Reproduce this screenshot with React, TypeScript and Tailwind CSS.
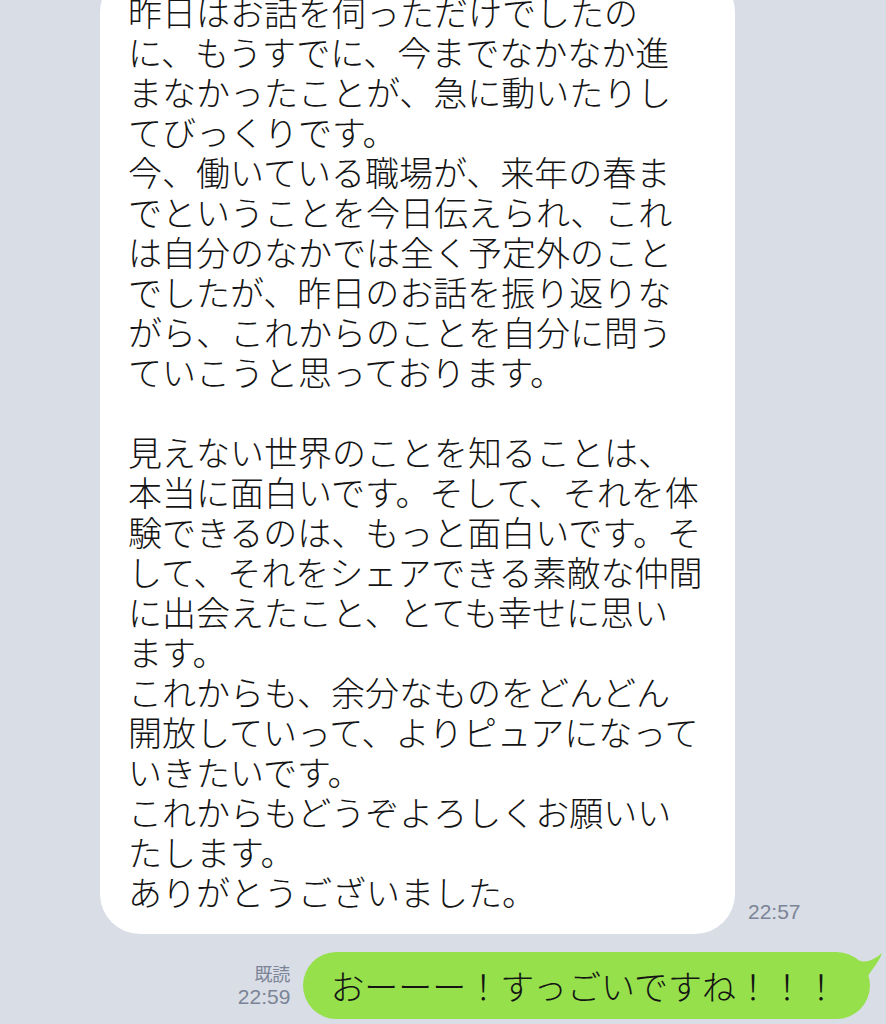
import React from 'react';

const lines = [
  '昨日はお話を伺っただけでしたの',
  'に、もうすでに、今までなかなか進',
  'まなかったことが、急に動いたりし',
  'てびっくりです。',
  '今、働いている職場が、来年の春ま',
  'でということを今日伝えられ、これ',
  'は自分のなかでは全く予定外のこと',
  'でしたが、昨日のお話を振り返りな',
  'がら、これからのことを自分に問う',
  'ていこうと思っております。',
  '',
  '見えない世界のことを知ることは、',
  '本当に面白いです。そして、それを体',
  '験できるのは、もっと面白いです。そ',
  'して、それをシェアできる素敵な仲間',
  'に出会えたこと、とても幸せに思い',
  'ます。',
  'これからも、余分なものをどんどん',
  '開放していって、よりピュアになって',
  'いきたいです。',
  'これからもどうぞよろしくお願いい',
  'たします。',
  'ありがとうございました。',
];

const jp = { fontFamily: '"Noto Sans CJK JP", "Noto Sans", sans-serif' };
const meta = { fontFamily: '"Liberation Sans", "Noto Sans CJK JP", sans-serif' };

const App: React.FC = () => {
  return (
    <div className="w-full h-[1024px] bg-[#d9dde6] flex flex-col justify-end overflow-hidden pb-[5px]">
      <div className="flex items-end pl-[100px]">
        <div className="w-[635px] rounded-[40px] bg-white pl-[28px] pr-[20px] pt-[20px] pb-[22px] text-[#141414] font-light" style={jp}>
          {lines.map((line, i) => (
            <div key={i} className="h-[40px] leading-[40px] text-[34px] whitespace-nowrap">
              {line}
            </div>
          ))}
        </div>
        <span className="ml-[13px] mb-[10px] text-[21px] leading-[24px] text-[#7b8496]" style={meta}>
          22:57
        </span>
      </div>

      <div className="flex items-end justify-end pr-[16px] mt-[18px]">
        <div className="flex flex-col items-end mr-[13px] mb-[10px] text-[#7b8496]">
          <span className="text-[18px] leading-[24px]" style={jp}>既読</span>
          <span className="text-[21px] leading-[24px]" style={meta}>22:59</span>
        </div>
        <div className="relative h-[67px] rounded-full bg-[#95e04b] pl-[27px] pr-[32px] flex items-center">
          <svg
            className="absolute right-[-14px] top-[-2px]"
            width="30"
            height="30"
            viewBox="0 0 30 30"
          >
            <path d="M0 8 C8 14 18 12 28 3 C25 12 19 18 14 26 L0 26 Z" fill="#95e04b" />
          </svg>
          <span className="relative text-[34px] leading-[40px] whitespace-nowrap text-[#141414] font-light" style={jp}>
            おーーー！すっごいですね！！！
          </span>
        </div>
      </div>
    </div>
  );
};

export default App;
